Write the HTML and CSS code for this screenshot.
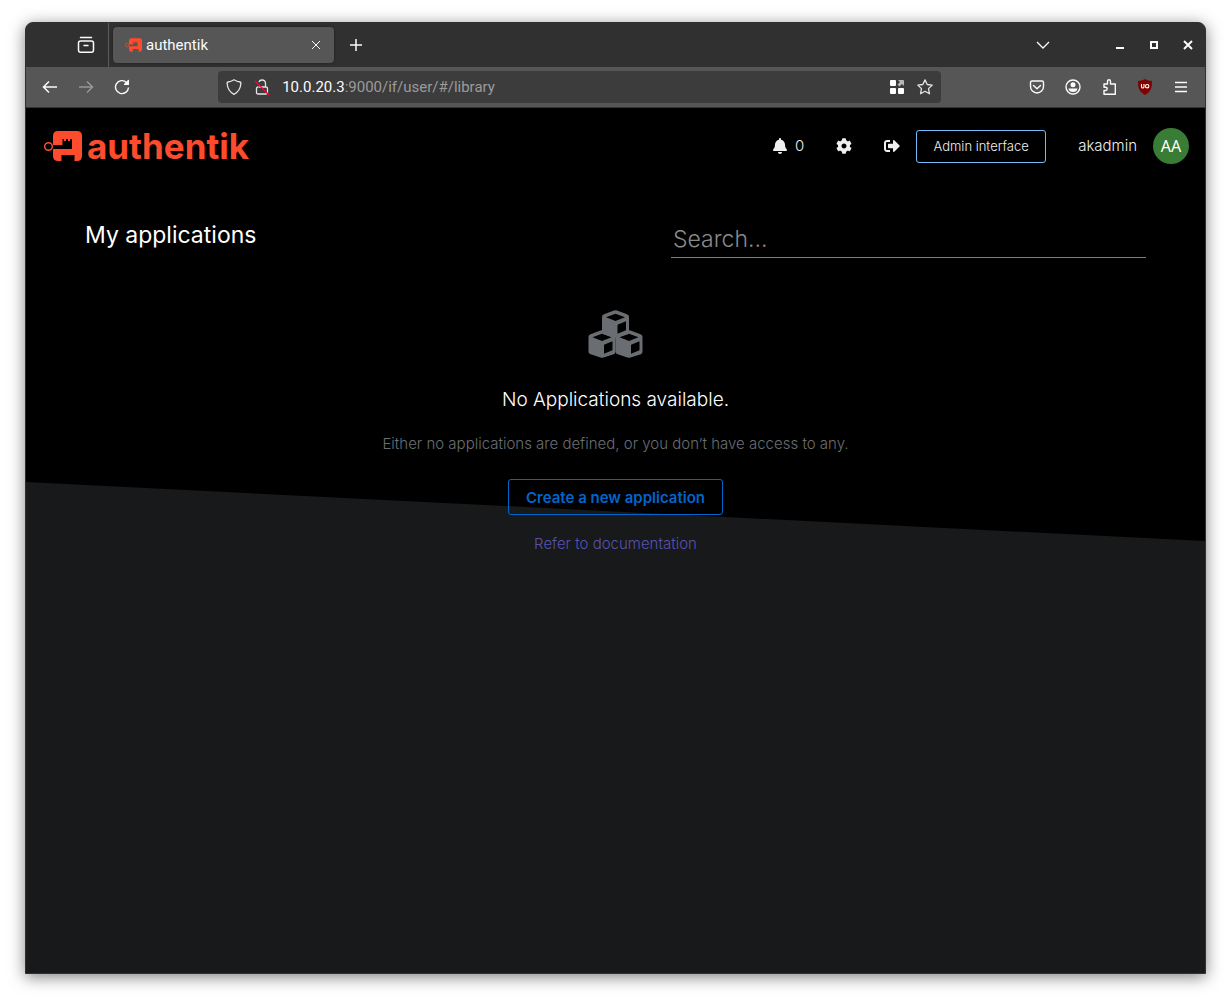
FILE: index.html
```html
<!DOCTYPE html>
<html lang="en">
<head>
<meta charset="utf-8">
<title>authentik</title>
<link rel="stylesheet" href="styles.css">
</head>
<body>
<svg class="defs" aria-hidden="true">
  <symbol id="key-mark" viewBox="0 0 38 30">
    <circle cx="4.5" cy="15.5" r="3.8" fill="none" stroke="currentColor" stroke-width="1.5"/>
    <path fill="currentColor" fill-rule="evenodd" d="M14 0H33Q38 0 38 5V25Q38 30 33 30H30.500V24H17.500V30H14Q9 30 9 25V18H28V8H26V10H24V8H22V10H20V8H18.500V14H9V5Q9 0 14 0Z"/>
  </symbol>
  <symbol id="cube" viewBox="0 0 28 28">
    <path fill="currentColor" fill-rule="evenodd" d="M12.500.4Q14 0 15.500.4L25.500 4.300Q27.500 5 27.500 7V21.500Q27.500 23.500 25.800 24.300L15.500 27.600Q14 28 12.500 27.600L2 24Q.5 23.300.5 21.500V7Q.5 5 2.500 4.300ZM14 3.800L4.500 7.200L14 11L23.500 7.200ZM16 14.700V23.700L24.500 20.200V11.200Z"/>
  </symbol>
</svg>
<div class="window">
  <header class="tabbar">
    <button class="icon-btn view" aria-label="Recent tabs"><svg width="18" height="18" viewBox="0 0 18 18" fill="none" stroke="currentColor" stroke-width="1.5"><path d="M3.500 1.500H14.500M3.500 5H14.500Q16.500 5 16.500 7V14Q16.500 16.300 14.500 16.300H3.500Q1.500 16.300 1.500 14V7Q1.500 5 3.500 5ZM7 9.500H11" stroke-linecap="round"/></svg></button>
    <div class="tab">
      <svg class="favicon" width="17" height="14"><use href="#key-mark"/></svg>
      <span class="tab-title">authentik</span>
      <button class="icon-btn" aria-label="Close tab"><svg width="10" height="10" viewBox="0 0 10 10" stroke="currentColor" stroke-width="1"><path d="M1 1L9 9M9 1L1 9"/></svg></button>
    </div>
    <button class="icon-btn" aria-label="New tab"><svg width="14" height="14" viewBox="0 0 14 14" stroke="currentColor" stroke-width="1.500"><path d="M7 1V13M1 7H13"/></svg></button>
    <div class="window-controls">
      <button class="icon-btn list" aria-label="List all tabs"><svg width="14" height="14" viewBox="0 0 14 14" fill="none" stroke="currentColor" stroke-width="1.300"><path d="M1 4L7 10L13 4"/></svg></button>
      <button class="icon-btn" aria-label="Minimize"><svg width="10" height="10" viewBox="0 0 10 10"><path fill="currentColor" d="M1 7H9V9H1Z"/></svg></button>
      <button class="icon-btn" aria-label="Maximize"><svg width="10" height="10" viewBox="0 0 10 10"><path fill="none" stroke="currentColor" stroke-width="2" d="M2 2H8V8H2Z"/></svg></button>
      <button class="icon-btn" aria-label="Close"><svg width="10" height="10" viewBox="0 0 10 10"><path stroke="currentColor" stroke-width="2" d="M1 1L9 9M9 1L1 9"/></svg></button>
    </div>
  </header>
  <nav class="toolbar" aria-label="Navigation">
    <div class="nav-buttons">
      <button class="icon-btn" aria-label="Back"><svg width="16" height="16" viewBox="0 0 16 16" fill="none" stroke="currentColor" stroke-width="1.500"><path d="M15 8H1.500M7 2.500L1.500 8L7 13.500"/></svg></button>
      <button class="icon-btn" aria-label="Forward" disabled><svg width="16" height="16" viewBox="0 0 16 16" fill="none" stroke="currentColor" stroke-width="1.500"><path d="M1 8H14.500M9 2.500L14.500 8L9 13.500"/></svg></button>
      <button class="icon-btn" aria-label="Reload"><svg width="16" height="16" viewBox="0 0 16 16" fill="none" stroke="currentColor" stroke-width="1.400"><path d="M14.500 8.500A6.500 6.500 0 1 1 12.500 3.400"/><path fill="currentColor" stroke="none" d="M14 1Q15 .5 15 1.500V6H10.500Q9.500 6 10 5Z"/></svg></button>
    </div>
    <div class="address">
      <svg width="16" height="16" viewBox="0 0 16 16" fill="none" stroke="#e4e4e4" stroke-width="1.300"><path stroke-linejoin="round" d="M8 .8Q11 2.700 14 3Q15 3.200 14.900 4.300C14.600 9 12.500 13 8 15.300C3.500 13 1.400 9 1.100 4.300Q1 3.200 2 3Q5 2.700 8 .8Z"/></svg>
      <svg width="16" height="16" viewBox="0 0 16 16" fill="none" stroke="#e4e4e4" stroke-width="1.300"><path d="M4.500 8H12Q13.500 8 13.500 9.500V13.500Q13.500 15 12 15H4Q2.500 15 2.500 13.500V9.500Q2.500 8 4 8M11.500 8V4.500Q11.500 1 8 1Q5.500 1 5 3"/><path stroke="#ff0039" stroke-width="1.300" d="M1 2L15 16"/></svg>
      <div class="url"><b>10.0.20.3</b>:9000/if/user/#/library</div>
      <svg width="16" height="16" viewBox="0 0 16 16" fill="#fff"><rect x="1" y="1" width="6" height="6" rx="1"/><rect x="1" y="9" width="6" height="6" rx="1"/><rect x="9" y="9" width="6" height="6" rx="1"/><path fill="#b8b8b8" d="M9 1H14Q15 1 15 2V7L13 5L10.500 7.500L8.500 5.500L11 3Z"/></svg>
      <svg width="16" height="16" viewBox="0 0 16 16" fill="none" stroke="#e4e4e4" stroke-width="1.300" stroke-linejoin="round"><path d="M8 .9L10.200 5.500L15.200 6.100L11.500 9.600L12.500 14.800L8 12.300L3.500 14.800L4.500 9.600L.8 6.100L5.800 5.500Z"/></svg>
    </div>
    <div class="extensions">
      <button class="icon-btn" aria-label="Save to Pocket"><svg width="16" height="16" viewBox="0 0 16 16" fill="none" stroke="currentColor" stroke-width="1.400" stroke-linecap="round" stroke-linejoin="round"><path d="M3 2H13Q14.500 2 14.500 3.500V7.500A6.500 6.500 0 0 1 1.500 7.500V3.500Q1.500 2 3 2ZM4.500 6.500L8 9.700L11.500 6.500"/></svg></button>
      <button class="icon-btn" aria-label="Account"><svg width="16" height="16" viewBox="0 0 16 16"><circle cx="8" cy="8" r="7" fill="none" stroke="currentColor" stroke-width="1.400"/><circle cx="8" cy="5.700" r="2.500" fill="currentColor"/><path fill="currentColor" d="M3.500 9.500H12.500Q12 13 8 13Q4 13 3.500 9.500Z"/></svg></button>
      <button class="icon-btn" aria-label="Extensions"><svg width="16" height="16" viewBox="0 0 16 16" fill="none" stroke="currentColor" stroke-width="1.400" stroke-linejoin="round"><path d="M6.500 5V2.500Q6.500.8 8 .8Q9.500.8 9.500 2.500V5H14.300V15.200H3V11.500H4.500Q6.200 11.500 6.200 9.800Q6.200 8.200 4.500 8.200H3V5Z"/></svg></button>
      <button class="icon-btn" aria-label="uBlock Origin"><svg width="16" height="16" viewBox="0 0 16 16"><path fill="#800000" d="M8 0Q11 2 15 2C15 9 14 12.500 8 16C2 12.500 1 9 1 2Q5 2 8 0Z"/><path fill="none" stroke="#fff" stroke-width="1.100" d="M4.500 5V8Q4.500 9 5.700 9Q7 9 7 8V5"/><circle cx="10.200" cy="7.200" r="1.700" fill="none" stroke="#fff" stroke-width="1.100"/></svg></button>
      <button class="icon-btn" aria-label="Menu"><svg width="16" height="16" viewBox="0 0 16 16" stroke="currentColor" stroke-width="1.300"><path d="M2 3.500H14M2 8H14M2 12.500H14"/></svg></button>
    </div>
  </nav>
  <main class="page">
    <div class="masthead">
      <a class="brand" href="#/library"><svg width="38" height="30"><use href="#key-mark"/></svg><span>authentik</span></a>
      <div class="tools">
        <button class="tool"><svg width="14" height="16" viewBox="0 0 448 512" fill="currentColor"><path d="M224 512c35.320 0 63.970-28.650 63.970-64H160.030c0 35.350 28.650 64 63.970 64zm215.390-149.710c-19.320-20.760-55.470-51.990-55.470-154.290 0-77.700-54.480-139.900-127.940-155.160V32c0-17.670-14.320-32-31.980-32s-31.980 14.330-31.980 32v20.840C118.560 68.100 64.080 130.300 64.080 208c0 102.300-36.150 133.530-55.470 154.290-6 6.450-8.660 14.160-8.610 21.710.11 16.400 12.980 32 32.100 32h383.800c19.120 0 32-15.600 32.100-32 .05-7.550-2.610-15.270-8.610-21.710z"/></svg>0</button>
        <button class="tool" aria-label="Settings"><svg width="16" height="16" viewBox="0 0 512 512" fill="currentColor"><path d="M487.400 315.700l-42.600-24.600c4.300-23.200 4.300-47 0-70.200l42.600-24.600c4.900-2.800 7.100-8.600 5.500-14-11.100-35.600-30-67.800-54.700-94.600-3.800-4.100-10-5.100-14.800-2.300L380.800 110c-17.900-15.400-38.500-27.300-60.800-35.100V25.800c0-5.600-3.900-10.500-9.400-11.700-36.700-8.200-74.300-7.800-109.200 0-5.500 1.200-9.400 6.100-9.400 11.700V75c-22.200 7.900-42.800 19.800-60.800 35.100L88.700 85.500c-4.900-2.800-11-1.900-14.800 2.300-24.700 26.700-43.600 58.900-54.700 94.600-1.700 5.400.6 11.200 5.500 14L67.300 221c-4.300 23.200-4.300 47 0 70.200l-42.600 24.600c-4.900 2.800-7.100 8.600-5.500 14 11.100 35.600 30 67.800 54.700 94.600 3.800 4.100 10 5.100 14.800 2.300l42.600-24.600c17.900 15.400 38.500 27.300 60.800 35.100v49.200c0 5.600 3.900 10.500 9.400 11.700 36.700 8.200 74.300 7.800 109.200 0 5.500-1.200 9.400-6.100 9.400-11.700v-49.200c22.200-7.900 42.800-19.800 60.800-35.100l42.600 24.600c4.900 2.800 11 1.900 14.800-2.300 24.700-26.700 43.600-58.900 54.700-94.600 1.500-5.500-.7-11.300-5.600-14.100zM256 336c-44.100 0-80-35.900-80-80s35.900-80 80-80 80 35.900 80 80-35.900 80-80 80z"/></svg></button>
        <button class="tool" aria-label="Sign out"><svg width="16" height="16" viewBox="0 0 512 512" fill="currentColor"><path d="M497 273L329 441c-15 15-41 4.500-41-17v-96H152c-13.300 0-24-10.700-24-24v-96c0-13.300 10.700-24 24-24h136V88c0-21.400 25.900-32 41-17l168 168c9.300 9.400 9.300 24.600 0 34zM192 436v-40c0-6.600-5.400-12-12-12H96c-17.700 0-32-14.300-32-32V160c0-17.700 14.300-32 32-32h84c6.600 0 12-5.400 12-12V76c0-6.600-5.400-12-12-12H96c-53 0-96 43-96 96v192c0 53 43 96 96 96h84c6.600 0 12-5.400 12-12z"/></svg></button>
        <button class="admin">Admin interface</button>
        <span class="user">akadmin</span>
        <span class="avatar">AA</span>
      </div>
    </div>
    <div class="library-head">
      <h1>My applications</h1>
      <input class="search" type="search" aria-label="Search" placeholder="Search...">
    </div>
    <section class="empty">
      <svg class="cubes" width="56" height="48" viewBox="0 0 56 48"><use href="#cube" x="13.500" y="0" width="28" height="28"/><use href="#cube" x="0" y="20" width="28" height="28"/><use href="#cube" x="27" y="20" width="28" height="28"/></svg>
      <h2>No Applications available.</h2>
      <p>Either no applications are defined, or you don’t have access to any.</p>
      <button class="create">Create a new application</button>
      <a class="docs" href="#/docs">Refer to documentation</a>
    </section>
  </main>
</div>
</body>
</html>
```
FILE: styles.css
```css
* { box-sizing: border-box; }
body {
  margin: 0;
  padding: 22px 25px 28px;
  min-height: 100vh;
  display: flex;
  background: #fff;
  font-family: Inter, "Open Sans", sans-serif;
}
.defs { position: absolute; width: 0; height: 0; }
svg { display: block; flex: none; }
button { font: inherit; color: inherit; background: none; border: 0; padding: 0; }
.window {
  flex: 1;
  display: flex;
  flex-direction: column;
  border: 1px solid #303133;
  border-radius: 8px 8px 0 0;
  overflow: hidden;
  background: #303030;
  box-shadow: 0 3px 16px rgba(0, 0, 0, .5);
}
.icon-btn { display: grid; place-items: center; min-width: 16px; height: 28px; color: #fbfbfe; }
.icon-btn:disabled { color: #979797; }

.tabbar {
  height: 44px;
  display: flex;
  align-items: center;
  color: #fbfbfe;
  font: 15px/20px Roboto, sans-serif;
}
.view { align-self: stretch; height: auto; width: 83px; padding-left: 37px; border-right: 1px solid #5c5c5c; }
.tab {
  width: 221px;
  height: 36px;
  margin: 0 14px 0 4px;
  padding: 0 10px 0 12px;
  display: flex;
  align-items: center;
  gap: 4px;
  border-radius: 4px;
  background: #565656;
  box-shadow: 0 0 3px rgba(0, 0, 0, .4);
}
.favicon { color: #fd4b2d; }
.tab-title { flex: 1; }
.window-controls { margin-left: auto; padding-right: 9px; display: flex; gap: 18px; }
.list { margin-right: 43px; }

.toolbar {
  height: 41px;
  padding: 0 16px;
  display: flex;
  align-items: center;
  justify-content: space-between;
  background: #565656;
  border-bottom: 1px solid #343434;
}
.nav-buttons, .extensions { display: flex; gap: 20px; }
.address {
  width: 63%;
  height: 32px;
  padding: 0 8px;
  display: flex;
  align-items: center;
  gap: 12px;
  border-radius: 4px;
  background: #3c3c3c;
  color: #9b9b9b;
  font: 15px/20px Roboto, sans-serif;
}
.url { flex: 1; }
.url b { font-weight: 400; color: #fbfbfe; }

.page { flex: 1; position: relative; isolation: isolate; background: #18191a; color: #fff; }
.page::before {
  content: "";
  position: absolute;
  inset: 0;
  z-index: -1;
  background: #000;
  clip-path: polygon(0 0, 100% 0, 100% 433px, 0 374px);
}
.masthead {
  height: 76px;
  padding: 0 16px 0 18px;
  display: flex;
  align-items: center;
  justify-content: space-between;
}
.brand { display: flex; align-items: center; gap: 5px; color: #fd4b2d; text-decoration: none; font-size: 35px; line-height: 40px; font-weight: 700; }
.tools { display: flex; align-items: center; color: #f0f0f0; font-size: 15px; font-weight: 300; line-height: 24px; }
.tool { display: flex; align-items: center; gap: 8px; margin-right: 32px; }
.tool:nth-child(3) { margin-right: 16px; }
.admin { width: 130px; height: 33px; border: 1px solid #73bcf7; border-radius: 3px; font-size: 13px; }
.user { margin: 0 16px 0 32px; }
.avatar { width: 36px; height: 36px; border-radius: 50%; background: #387c35; color: #fff; display: grid; place-items: center; font: 16px/24px "Noto Sans", sans-serif; }

.library-head { padding: 32px 59px 0; display: grid; grid-template-columns: 1fr 475px; }
h1, h2, p { margin: 0; }
h1 { font-size: 23px; line-height: 38px; font-weight: 400; }
.search {
  height: 42px;
  padding: 4px 2px 0;
  border: 0;
  border-bottom: 1px solid #fd4b2d;
  background: none;
  color: #fff;
  font: 300 23px/32px Inter, sans-serif;
}
.search::placeholder { color: #8a8a8a; }

.empty { padding: 52px 16px 32px; display: flex; flex-direction: column; align-items: center; }
.cubes { color: #6a6e73; }
h2 { margin-top: 27px; font-size: 19px; line-height: 30px; font-weight: 300; }
p { margin-top: 17px; font-size: 15px; line-height: 24px; font-weight: 300; color: #6a6e73; }
.create { margin: 23px 0 17px; height: 36px; padding: 0 17px; border: 1px solid #06c; border-radius: 3px; color: #06c; font-size: 15px; font-weight: 600; }
.docs { color: #5752b0; font-size: 15px; line-height: 24px; font-weight: 300; text-decoration: none; }
```
